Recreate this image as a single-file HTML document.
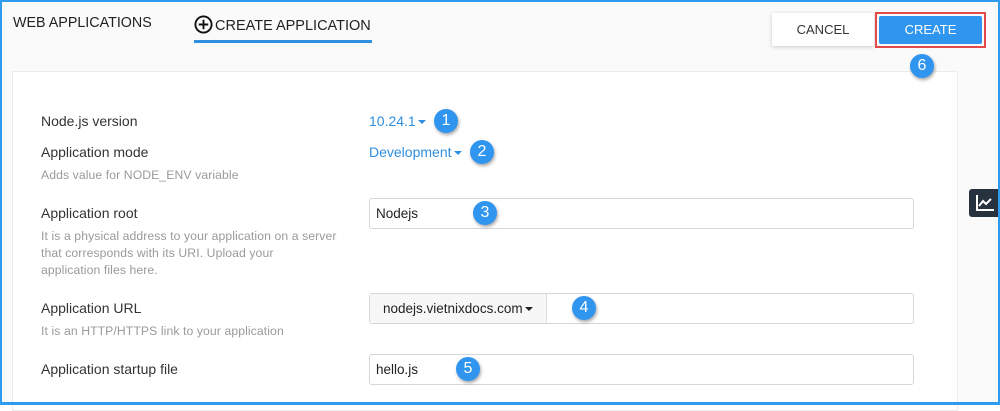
<!DOCTYPE html>
<html><head><meta charset="utf-8"><style>
*{box-sizing:border-box;margin:0;padding:0}
body{width:1000px;height:405px;overflow:hidden;background:#fff;font-family:"Liberation Sans",sans-serif;position:relative}
.frame{position:absolute;left:0;top:0;width:1000px;height:405px;border:2px solid #2f9bee;border-bottom-width:3px}
.bg{position:absolute;left:2px;top:2px;right:2px;bottom:3px;background:#fafafa}
.t{position:absolute;white-space:nowrap}
.card{position:absolute;left:12px;top:71px;width:946px;height:340px;background:#fff;border:1px solid #ececec}
.lbl{font-size:14px;color:#333}
.hint{font-size:12.2px;color:#9a9a9a;line-height:17px;letter-spacing:0.1px}
.blue{color:#2f8fe0;font-size:14px}
.input{position:absolute;background:#fff;border:1px solid #d6d6d6;border-radius:3px;font-size:13.5px;color:#222;padding-left:6px;line-height:29px;height:31px}
.badge{position:absolute;width:24px;height:24px;border-radius:50%;background:#2f95ee;color:#fff;font-size:16px;text-align:center;line-height:24px;box-shadow:1px 2px 3px rgba(0,0,0,.35)}
.caret{display:inline-block;border-left:4px solid transparent;border-right:4px solid transparent;border-top:4px solid currentColor;vertical-align:middle;margin-left:2px}
</style></head><body>
<div class="bg"></div>
<div class="card"></div>
<div class="t" style="left:13px;top:15px;font-size:14.3px;color:#222">WEB APPLICATIONS</div>
<div class="t" style="left:194px;top:15px;font-size:14.5px;color:#222">
<svg width="19" height="19" viewBox="0 0 20 20" style="vertical-align:-4px;margin-right:2px"><circle cx="10" cy="10" r="8.5" fill="none" stroke="#111" stroke-width="2"/><path d="M10 5v10M5 10h10" stroke="#111" stroke-width="2"/></svg>CREATE APPLICATION</div>
<div style="position:absolute;left:194px;top:40px;width:178px;height:3px;background:#2f8fe0"></div>
<div class="t" style="left:772px;top:13px;width:102px;height:33px;background:#fff;box-shadow:0 1px 4px rgba(0,0,0,.2);font-size:13px;color:#333;text-align:center;line-height:33px;border-radius:2px">CANCEL</div>
<div class="t" style="left:875px;top:12px;width:111px;height:36px;border:2px solid #e24a4a;padding:2px"><div style="background:#2f95ee;height:100%;color:#fff;font-size:13px;text-align:center;line-height:28px;border-radius:2px">CREATE</div></div>
<div class="badge" style="left:910px;top:54px">6</div>
<div class="t lbl" style="left:41px;top:113px">Node.js version</div>
<div class="t blue" style="left:369px;top:113px">10.24.1<span class="caret"></span></div>
<div class="badge" style="left:434px;top:109px">1</div>
<div class="t lbl" style="left:41px;top:144px">Application mode</div>
<div class="t blue" style="left:369px;top:144px">Development<span class="caret"></span></div>
<div class="badge" style="left:470px;top:140px">2</div>
<div class="t hint" style="left:41px;top:167px">Adds value for NODE_ENV variable</div>
<div class="t lbl" style="left:41px;top:205px">Application root</div>
<div class="t hint" style="left:41px;top:228px">It is a physical address to your application on a server<br>that corresponds with its URI. Upload your<br>application files here.</div>
<div class="input" style="left:369px;top:198px;width:545px">Nodejs</div>
<div class="badge" style="left:473px;top:201px">3</div>
<div class="t lbl" style="left:41px;top:300px">Application URL</div>
<div class="t hint" style="left:41px;top:323px">It is an HTTP/HTTPS link to your application</div>
<div class="input" style="left:369px;top:293px;width:545px;padding:0"><div style="width:177px;height:29px;background:#f7f7f7;border-right:1px solid #ddd;padding-left:13px;font-size:13.5px">nodejs.vietnixdocs.com<span class="caret"></span></div></div>
<div class="badge" style="left:572px;top:296px">4</div>
<div class="t lbl" style="left:41px;top:361px">Application startup file</div>
<div class="input" style="left:369px;top:354px;width:545px">hello.js</div>
<div class="badge" style="left:456px;top:357px">5</div>
<div style="position:absolute;left:969px;top:189px;width:31px;height:28px;background:#26323d;border-radius:3px 0 0 3px">
<svg width="20" height="18" viewBox="0 0 20 18" style="position:absolute;left:6px;top:5px"><path d="M2 1v15h17" fill="none" stroke="#fff" stroke-width="2"/><path d="M4 12l4-5 3 3 5-5" fill="none" stroke="#fff" stroke-width="2"/></svg></div>
<div class="frame"></div>
</body></html>
